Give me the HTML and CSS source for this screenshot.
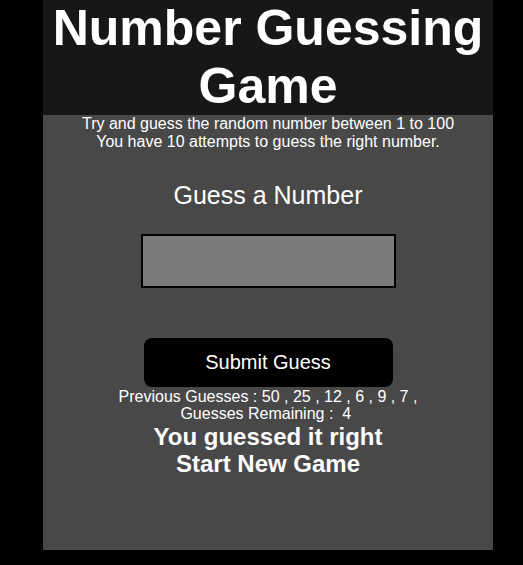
FILE: index.html
```html
<!DOCTYPE html>
<html lang="en">
<head>
<meta charset="utf-8">
<title>Number Guessing Game</title>
<link rel="stylesheet" href="styles.css">
</head>
<body>
<div class="game">
  <header class="game-header">
    <h1 class="game-title">Number Guessing Game</h1>
  </header>
  <main class="game-body">
    <p class="intro">Try and guess the random number between 1 to 100<br>You have 10 attempts to guess the right number.</p>
    <form class="guess-form">
      <label class="guess-label" for="guess">Guess a Number</label>
      <input class="guess-input" id="guess" type="text">
      <button class="guess-submit" type="button">Submit Guess</button>
    </form>
    <div class="stats">
      <p class="stats-line">Previous Guesses : 50 , 25 , 12 , 6 , 9 , 7 , </p>
      <p class="stats-line">Guesses Remaining : &nbsp;4&nbsp;</p>
    </div>
    <p class="result">You guessed it right</p>
    <p class="restart">Start New Game</p>
  </main>
</div>
</body>
</html>
```

FILE: styles.css
```css
html, body {
  margin: 0;
  padding: 0;
  background: #000;
}

body {
  font-family: "Liberation Sans", Arial, sans-serif;
  color: #fff;
}

.game {
  width: 450px;
  height: 550px;
  margin-left: 43px;
  display: flex;
  flex-direction: column;
  background: #484848;
}

.game-header {
  background: #171717;
}

.game-title {
  margin: 0;
  font-size: 50px;
  line-height: 57.5px;
  font-weight: bold;
  text-align: center;
}

.game-body {
  display: flex;
  flex-direction: column;
  align-items: center;
  text-align: center;
}

.intro {
  margin: 0;
  font-size: 16px;
  line-height: 18.4px;
}

.guess-form {
  display: flex;
  flex-direction: column;
  align-items: center;
}

.guess-label {
  margin-top: 29px;
  font-size: 25px;
  line-height: 28px;
}

.guess-input {
  box-sizing: border-box;
  margin: 25px 0 0 1px;
  width: 255px;
  height: 54px;
  border: 2px solid #000;
  background: #7b7b7b;
  padding: 0;
}

.guess-submit {
  box-sizing: border-box;
  margin-top: 50px;
  width: 249px;
  height: 49px;
  border: none;
  border-radius: 8px;
  background: #000;
  color: #fff;
  font-family: "Liberation Sans", Arial, sans-serif;
  font-size: 20px;
}

.stats {
  margin-top: 1px;
}

.stats-line {
  margin: 0;
  font-size: 16px;
  line-height: 17.5px;
}

.result,
.restart {
  margin: 0;
  font-size: 24px;
  line-height: 27.6px;
  font-weight: bold;
}
```
